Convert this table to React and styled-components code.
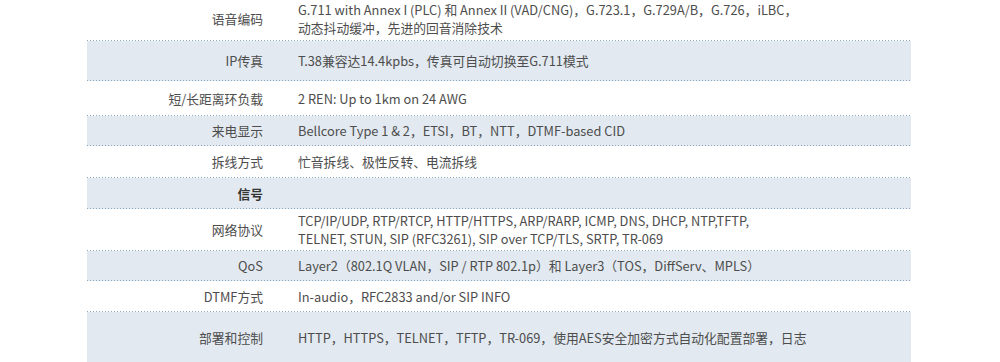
import React from "react";
import styled, { createGlobalStyle } from "styled-components";

const Global = createGlobalStyle`
  body {
    margin: 0;
    background: #ffffff;
    font-family: "Noto Sans CJK SC", "Noto Sans", sans-serif;
  }
`;

const Table = styled.div`
  width: 824px;
  margin-left: 87px;
  display: flex;
  flex-direction: column;
`;

const Row = styled.div`
  display: grid;
  grid-template-columns: 176px 1fr;
  column-gap: 35px;
  align-items: center;
  height: ${(p) => p.h}px;
  padding-bottom: ${(p) => p.pb || 0}px;
  box-sizing: border-box;
  background-color: ${(p) => (p.shade ? "#e2e9f0" : "#ffffff")};
  background-image: linear-gradient(to right, #86a8c0 1px, transparent 1px);
  background-size: 3px 1px;
  background-repeat: repeat-x;
  background-position: 0 100%;
  font-size: 12.8px;
  line-height: 18px;
  color: #4d4d4d;
`;

const Label = styled.div`
  text-align: right;
  font-weight: ${(p) => (p.bold ? 700 : 400)};
  color: ${(p) => (p.bold ? "#333333" : "#4d4d4d")};
`;

const Value = styled.div`
  white-space: nowrap;
`;

const rows = [
  {
    label: "语音编码",
    h: 41,
    pb: 4,
    value: [
      "G.711 with Annex I (PLC) 和 Annex II (VAD/CNG)，G.723.1，G.729A/B，G.726，iLBC，",
      "动态抖动缓冲，先进的回音消除技术",
    ],
  },
  { label: "IP传真", h: 40, shade: true, value: ["T.38兼容达14.4kpbs，传真可自动切换至G.711模式"] },
  { label: "短/长距离环负载", h: 35, value: ["2 REN: Up to 1km on 24 AWG"] },
  { label: "来电显示", h: 30, shade: true, value: ["Bellcore Type 1 & 2，ETSI，BT，NTT，DTMF-based CID"] },
  { label: "拆线方式", h: 32, value: ["忙音拆线、极性反转、电流拆线"] },
  { label: "信号", h: 31, shade: true, bold: true, value: [""] },
  {
    label: "网络协议",
    h: 42,
    value: [
      "TCP/IP/UDP, RTP/RTCP, HTTP/HTTPS, ARP/RARP, ICMP, DNS, DHCP, NTP,TFTP,",
      "TELNET, STUN, SIP (RFC3261), SIP over TCP/TLS, SRTP, TR-069",
    ],
  },
  {
    label: "QoS",
    h: 30,
    shade: true,
    value: ["Layer2（802.1Q VLAN，SIP / RTP 802.1p）和 Layer3（TOS，DiffServ、MPLS）"],
  },
  { label: "DTMF方式", h: 31, value: ["In-audio，RFC2833 and/or SIP INFO"] },
  {
    label: "部署和控制",
    h: 52,
    shade: true,
    value: ["HTTP，HTTPS，TELNET，TFTP，TR-069，使用AES安全加密方式自动化配置部署，日志"],
  },
];

export default function App() {
  return (
    <>
      <Global />
      <Table>
        {rows.map((r) => (
          <Row key={r.label} h={r.h} pb={r.pb} shade={r.shade ? 1 : 0}>
            <Label bold={r.bold ? 1 : 0}>{r.label}</Label>
            <Value>
              {r.value.map((line, i) => (
                <div key={i}>{line}</div>
              ))}
            </Value>
          </Row>
        ))}
      </Table>
    </>
  );
}
